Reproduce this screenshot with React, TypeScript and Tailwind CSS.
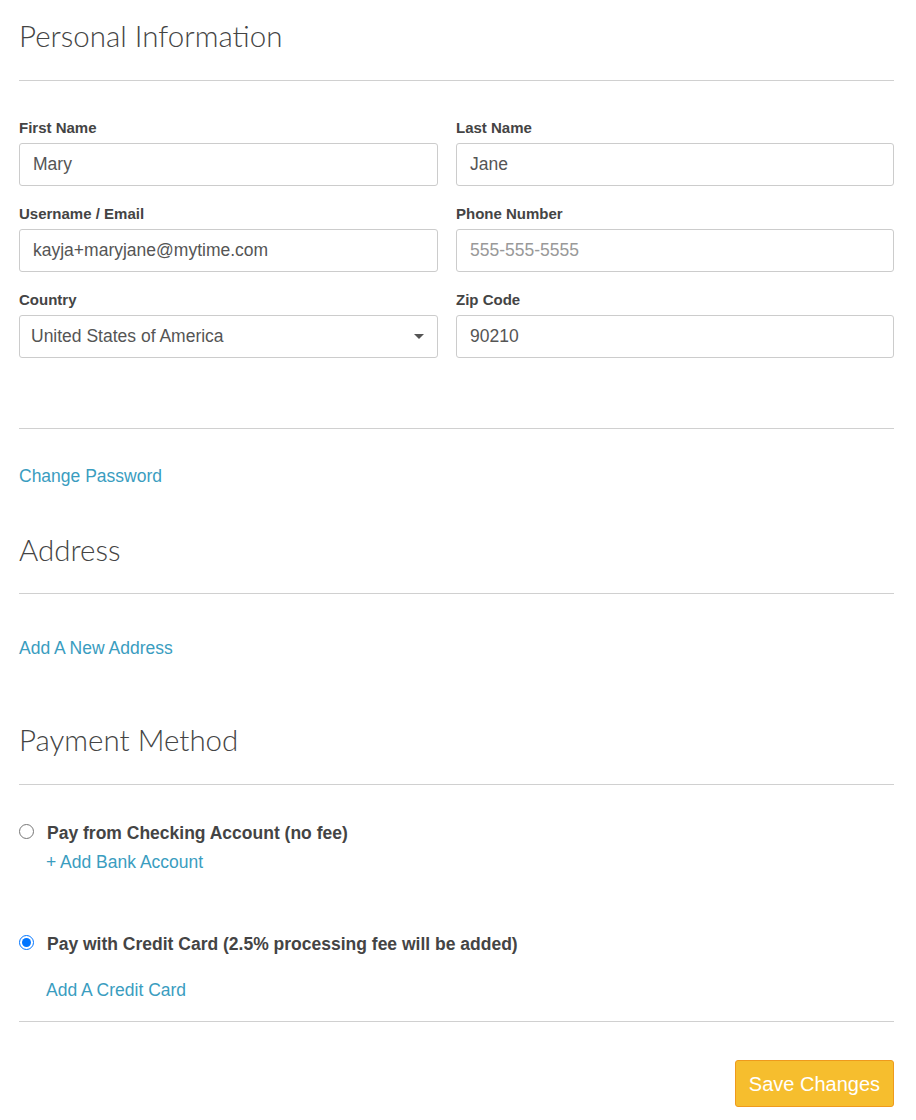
const HEAD = "font-['Lato',sans-serif] font-light text-[29.5px] leading-[36px] text-[#444]";
const BODY = "font-['Liberation_Sans',Arial,sans-serif]";
const LINK = "text-[17.5px] leading-6 text-[#3a9dbf]";

function Field({
  label,
  value,
  placeholder,
}: {
  label: string;
  value?: string;
  placeholder?: string;
}) {
  return (
    <div className="flex flex-col">
      <label className="mb-[5px] text-[15px] font-bold leading-5 text-[#444]">{label}</label>
      <div className="flex h-[43px] items-center rounded-[3px] border border-[#ccc] px-[13px] text-[17.5px]">
        {value ? (
          <span className="text-[#555]">{value}</span>
        ) : (
          <span className="text-[#999]">{placeholder}</span>
        )}
      </div>
    </div>
  );
}

function SelectField({ label, value }: { label: string; value: string }) {
  return (
    <div className="flex flex-col">
      <label className="mb-[5px] text-[15px] font-bold leading-5 text-[#444]">{label}</label>
      <div className="flex h-[43px] items-center justify-between rounded-[3px] border border-[#ccc] pl-[11px] pr-[13px] text-[17.5px] text-[#555]">
        <span>{value}</span>
        <span className="h-0 w-0 border-x-[5px] border-t-[5px] border-x-transparent border-t-[#555]" />
      </div>
    </div>
  );
}

function Radio({ checked, label }: { checked?: boolean; label: string }) {
  return (
    <label className="flex items-center">
      <input
        type="radio"
        name="pay"
        defaultChecked={checked}
        className="ml-0 mr-[13px] mt-[-3px] h-[15px] w-[15px] accent-[#0075ff]"
      />
      <span className="text-[17.5px] font-bold leading-6 text-[#444]">{label}</span>
    </label>
  );
}

export default function App() {
  return (
    <div className={`${BODY} min-h-[1120px] bg-white pl-[19px] pr-[22px]`}>
      <h1 className={`${HEAD} pt-[18px]`}>Personal Information</h1>
      <hr className="mt-[26px] border-t border-[#d0d0d0]" />

      <div className="mt-[37px] grid grid-cols-[419px_1fr] gap-x-[18px] gap-y-[18px]">
        <Field label="First Name" value="Mary" />
        <Field label="Last Name" value="Jane" />
        <Field label="Username / Email" value="kayja+maryjane@mytime.com" />
        <Field label="Phone Number" placeholder="555-555-5555" />
        <SelectField label="Country" value="United States of America" />
        <Field label="Zip Code" value="90210" />
      </div>

      <hr className="mt-[70px] border-t border-[#d0d0d0]" />
      <a className={`mt-[35px] block ${LINK}`}>Change Password</a>

      <h2 className={`${HEAD} mt-[44px]`}>Address</h2>
      <hr className="mt-[25px] border-t border-[#d0d0d0]" />
      <a className={`mt-[42px] block ${LINK}`}>Add A New Address</a>

      <h2 className={`${HEAD} mt-[62px]`}>Payment Method</h2>
      <hr className="mt-[26px] border-t border-[#d0d0d0]" />

      <div className="mt-[36px]">
        <Radio label="Pay from Checking Account (no fee)" />
        <a className={`ml-[27px] mt-[5px] block ${LINK}`}>+ Add Bank Account</a>
      </div>
      <div className="mt-[58px]">
        <Radio checked label="Pay with Credit Card (2.5% processing fee will be added)" />
        <a className={`ml-[27px] mt-[22px] block ${LINK}`}>Add A Credit Card</a>
      </div>

      <hr className="mt-[19px] border-t border-[#d0d0d0]" />
      <div className="mt-[38px] flex justify-end">
        <button className="h-[47px] rounded-[3px] border border-[#ef9a1c] bg-[#f6be2e] px-[13px] text-[20px] text-white">
          Save Changes
        </button>
      </div>
    </div>
  );
}
